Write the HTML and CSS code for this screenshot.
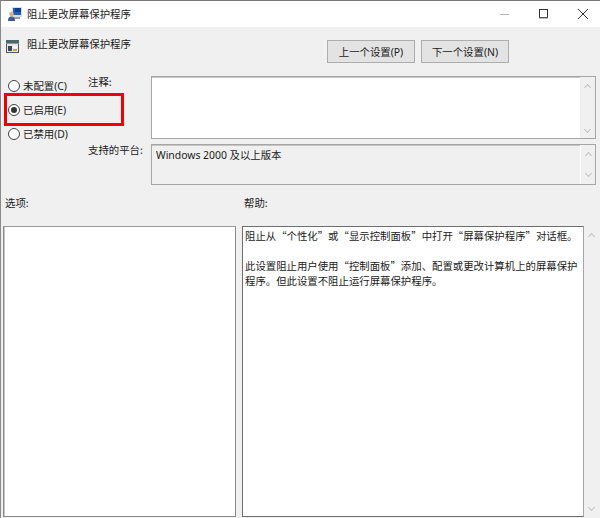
FILE: index.html
```html
<!DOCTYPE html>
<html lang="zh-CN">
<head>
<meta charset="utf-8">
<title>阻止更改屏幕保护程序</title>
<link rel="stylesheet" href="styles.css">
</head>
<body>
<div class="window">
  <header class="titlebar">
    <svg class="icon title-icon" width="14" height="14" viewBox="0 0 14 14"><rect x="4" y="0" width="10" height="10" fill="#d8dde4"/><rect x="5" y="1" width="8" height="7" fill="#1f5fb4"/><rect x="7" y="1" width="6" height="4" fill="#0d3f8c"/><rect x="6" y="10" width="6" height="2" fill="#9aa3ad"/><circle cx="3.5" cy="7" r="2.3" fill="#d9b08c"/><path d="M0 14c0-3.500 1.500-4.500 3.500-4.500S7 10.500 7 14z" fill="#3d5f8f"/></svg>
    <span class="title-text">阻止更改屏幕保护程序</span>
    <div class="win-controls">
      <svg width="12" height="12" viewBox="0 0 12 12"><path d="M1 6.500h9" stroke="#b4b4b4" fill="none"/></svg>
      <svg width="12" height="12" viewBox="0 0 12 12"><rect x="1.500" y="1.500" width="8" height="8" fill="none" stroke="#333"/><path d="M1 10h9" stroke="#777"/></svg>
      <svg width="12" height="12" viewBox="0 0 12 12"><path d="M1 1l10 10M11 1L1 11" stroke="#333" fill="none"/></svg>
    </div>
  </header>
  <main class="content">
    <div class="top-row">
      <div class="policy-name">
        <svg class="icon" width="13" height="13" viewBox="0 0 13 13"><rect width="13" height="13" fill="#e6e8e8"/><rect width="13" height="3" fill="#4a6a68"/><rect y="3" width="13" height="1" fill="#9a8fa0"/><rect x="0" y="4" width="1" height="9" fill="#4f5a60"/><rect x="12" y="4" width="1" height="9" fill="#4f5a60"/><rect y="12" width="13" height="1" fill="#4f5a60"/><rect x="2" y="6" width="4" height="5" fill="#3f4a50"/><rect x="7" y="6" width="4" height="2" fill="#f7f7f7"/><rect x="7" y="9" width="4" height="2" fill="#c9a050"/></svg>
        <span>阻止更改屏幕保护程序</span>
      </div>
      <div class="nav-buttons">
        <button class="btn latin" type="button">上一个设置(P)</button>
        <button class="btn latin" type="button">下一个设置(N)</button>
      </div>
    </div>
    <div class="settings">
      <div class="radios latin">
        <label class="radio"><span class="dot"></span>未配置(C)</label>
        <label class="radio"><span class="dot checked"></span>已启用(E)</label>
        <label class="radio"><span class="dot"></span>已禁用(D)</label>
      </div>
      <div class="fields">
        <div class="field">
          <span class="field-label">注释:</span>
          <div class="box comment-box">
            <div class="scroll comment-scroll"><i class="up"></i><i class="down"></i></div>
          </div>
        </div>
        <div class="field">
          <span class="field-label">支持的平台:</span>
          <div class="box platform-box">
            <span class="platform-text latin">Windows 2000 及以上版本</span>
            <div class="scroll"><i class="up"></i><i class="down"></i></div>
          </div>
        </div>
      </div>
    </div>
    <div class="labels">
      <span>选项:</span>
      <span>帮助:</span>
    </div>
    <div class="panes">
      <div class="pane options-pane"></div>
      <div class="pane help-pane">
        <p>阻止从“个性化”或“显示控制面板”中打开“屏幕保护程序”对话框。</p>
        <p>此设置阻止用户使用“控制面板”添加、配置或更改计算机上的屏幕保护程序。但此设置不阻止运行屏幕保护程序。</p>
      </div>
      <div class="scroll help-scroll"><i class="up"></i><i class="down"></i></div>
    </div>
  </main>
  <div class="highlight"></div>
</div>
</body>
</html>
```

FILE: styles.css
```css
* { box-sizing: border-box; }
html, body { margin: 0; padding: 0; }
body {
  width: 600px;
  height: 518px;
  overflow: hidden;
  font-family: "Noto Sans CJK SC", "Liberation Sans", sans-serif;
  font-size: 10.4px;
  color: #1a1a1a;
}
.latin { font-family: "Noto Sans", "Noto Sans CJK SC", sans-serif; }
.window {
  position: relative;
  width: 600px;
  height: 518px;
  display: flex;
  flex-direction: column;
  background: #f0f0f0;
  border-top: 1px solid #777;
  border-left: 1px solid #8a8a8a;
}
.titlebar {
  height: 26px;
  flex: none;
  display: flex;
  align-items: center;
  background: #fff;
  padding: 0 0 1px 7px;
}
.title-text { margin-left: 5px; }
.icon { flex: none; display: block; }
.win-controls {
  margin-left: auto;
  display: flex;
  gap: 27px;
  padding-right: 11px;
}
.content {
  flex: 1;
  display: flex;
  flex-direction: column;
  padding: 0 0 0 2px;
}
.top-row {
  display: flex;
  justify-content: space-between;
  height: 36px;
  padding-top: 13px;
  padding-right: 91px;
}
.policy-name {
  display: flex;
  align-items: flex-start;
  gap: 8px;
  padding-left: 3px;
  line-height: 8px;
}
.nav-buttons { display: flex; gap: 6px; }
.btn {
  width: 88px;
  height: 23px;
  padding: 0;
  background: #e3e3e3;
  border: 1px solid #adadad;
  font-size: inherit;
  color: #1a1a1a;
}
.settings {
  display: flex;
  padding-top: 13px;
}
.radios {
  width: 85px;
  flex: none;
  display: flex;
  flex-direction: column;
  gap: 10px;
  padding: 2px 0 0 5px;
}
.radio {
  display: flex;
  align-items: center;
  gap: 3px;
  height: 14px;
}
.dot {
  width: 12px;
  height: 12px;
  margin-top: 2px;
  border: 1px solid #444;
  border-radius: 50%;
  background: #fff;
  display: flex;
  align-items: center;
  justify-content: center;
  flex: none;
}
.dot.checked::after {
  content: "";
  width: 6px;
  height: 6px;
  border-radius: 50%;
  background: #333;
}
.fields {
  flex: 1;
  display: flex;
  flex-direction: column;
  gap: 5px;
}
.field { display: flex; }
.field-label {
  width: 63px;
  flex: none;
  line-height: 12px;
}
.box {
  width: 445px;
  border: 1px solid #a6a6a6;
  box-shadow: inset 0 1px 0 #c4c4c4;
  display: flex;
}
.comment-box { height: 63px; background: #fff; justify-content: flex-end; }
.platform-box {
  height: 41px;
  background: #f0f0f0;
  justify-content: space-between;
}
.platform-text { padding: 3px 0 0 4px; line-height: 14px; }
.scroll {
  width: 15px;
  flex: none;
  display: flex;
  flex-direction: column;
  justify-content: space-between;
  align-items: center;
  padding: 8px 0;
  background: #f0f0f0;
}
.comment-scroll { padding-bottom: 6px; }
.up, .down {
  width: 5px;
  height: 5px;
  border-left: 1.500px solid #c2c2c2;
  border-top: 1.500px solid #c2c2c2;
  display: block;
}
.up { transform: rotate(45deg); }
.down { transform: rotate(225deg); }
.platform-box .scroll { border-left: 1px solid #fff; }
.labels {
  display: flex;
  height: 41px;
  padding: 11px 0 0 2px;
  line-height: 14px;
}
.labels span:first-child { width: 239px; }
.panes {
  display: flex;
  height: 291px;
}
.pane {
  height: 100%;
  background: #fff;
  border: 1px solid #8a8a8a;
  border-top-color: #9a9a9a;
}
.options-pane {
  width: 233px;
  box-shadow: inset 1px 0 0 #c8c8c8;
}
.help-pane {
  width: 342px;
  margin-left: 6px;
  border-color: #6e6e6e;
  border-right-color: #a6a6a6;
  padding: 1px 2px 0 2px;
  line-height: 15px;
}
.help-pane p { margin: 0 0 15px; }
.help-scroll {
  width: 15px;
  padding: 8px 0 7px;
}
.highlight {
  position: absolute;
  left: 3px;
  top: 92px;
  width: 120px;
  height: 33px;
  border: 3px solid #f00000;
  pointer-events: none;
}
```
